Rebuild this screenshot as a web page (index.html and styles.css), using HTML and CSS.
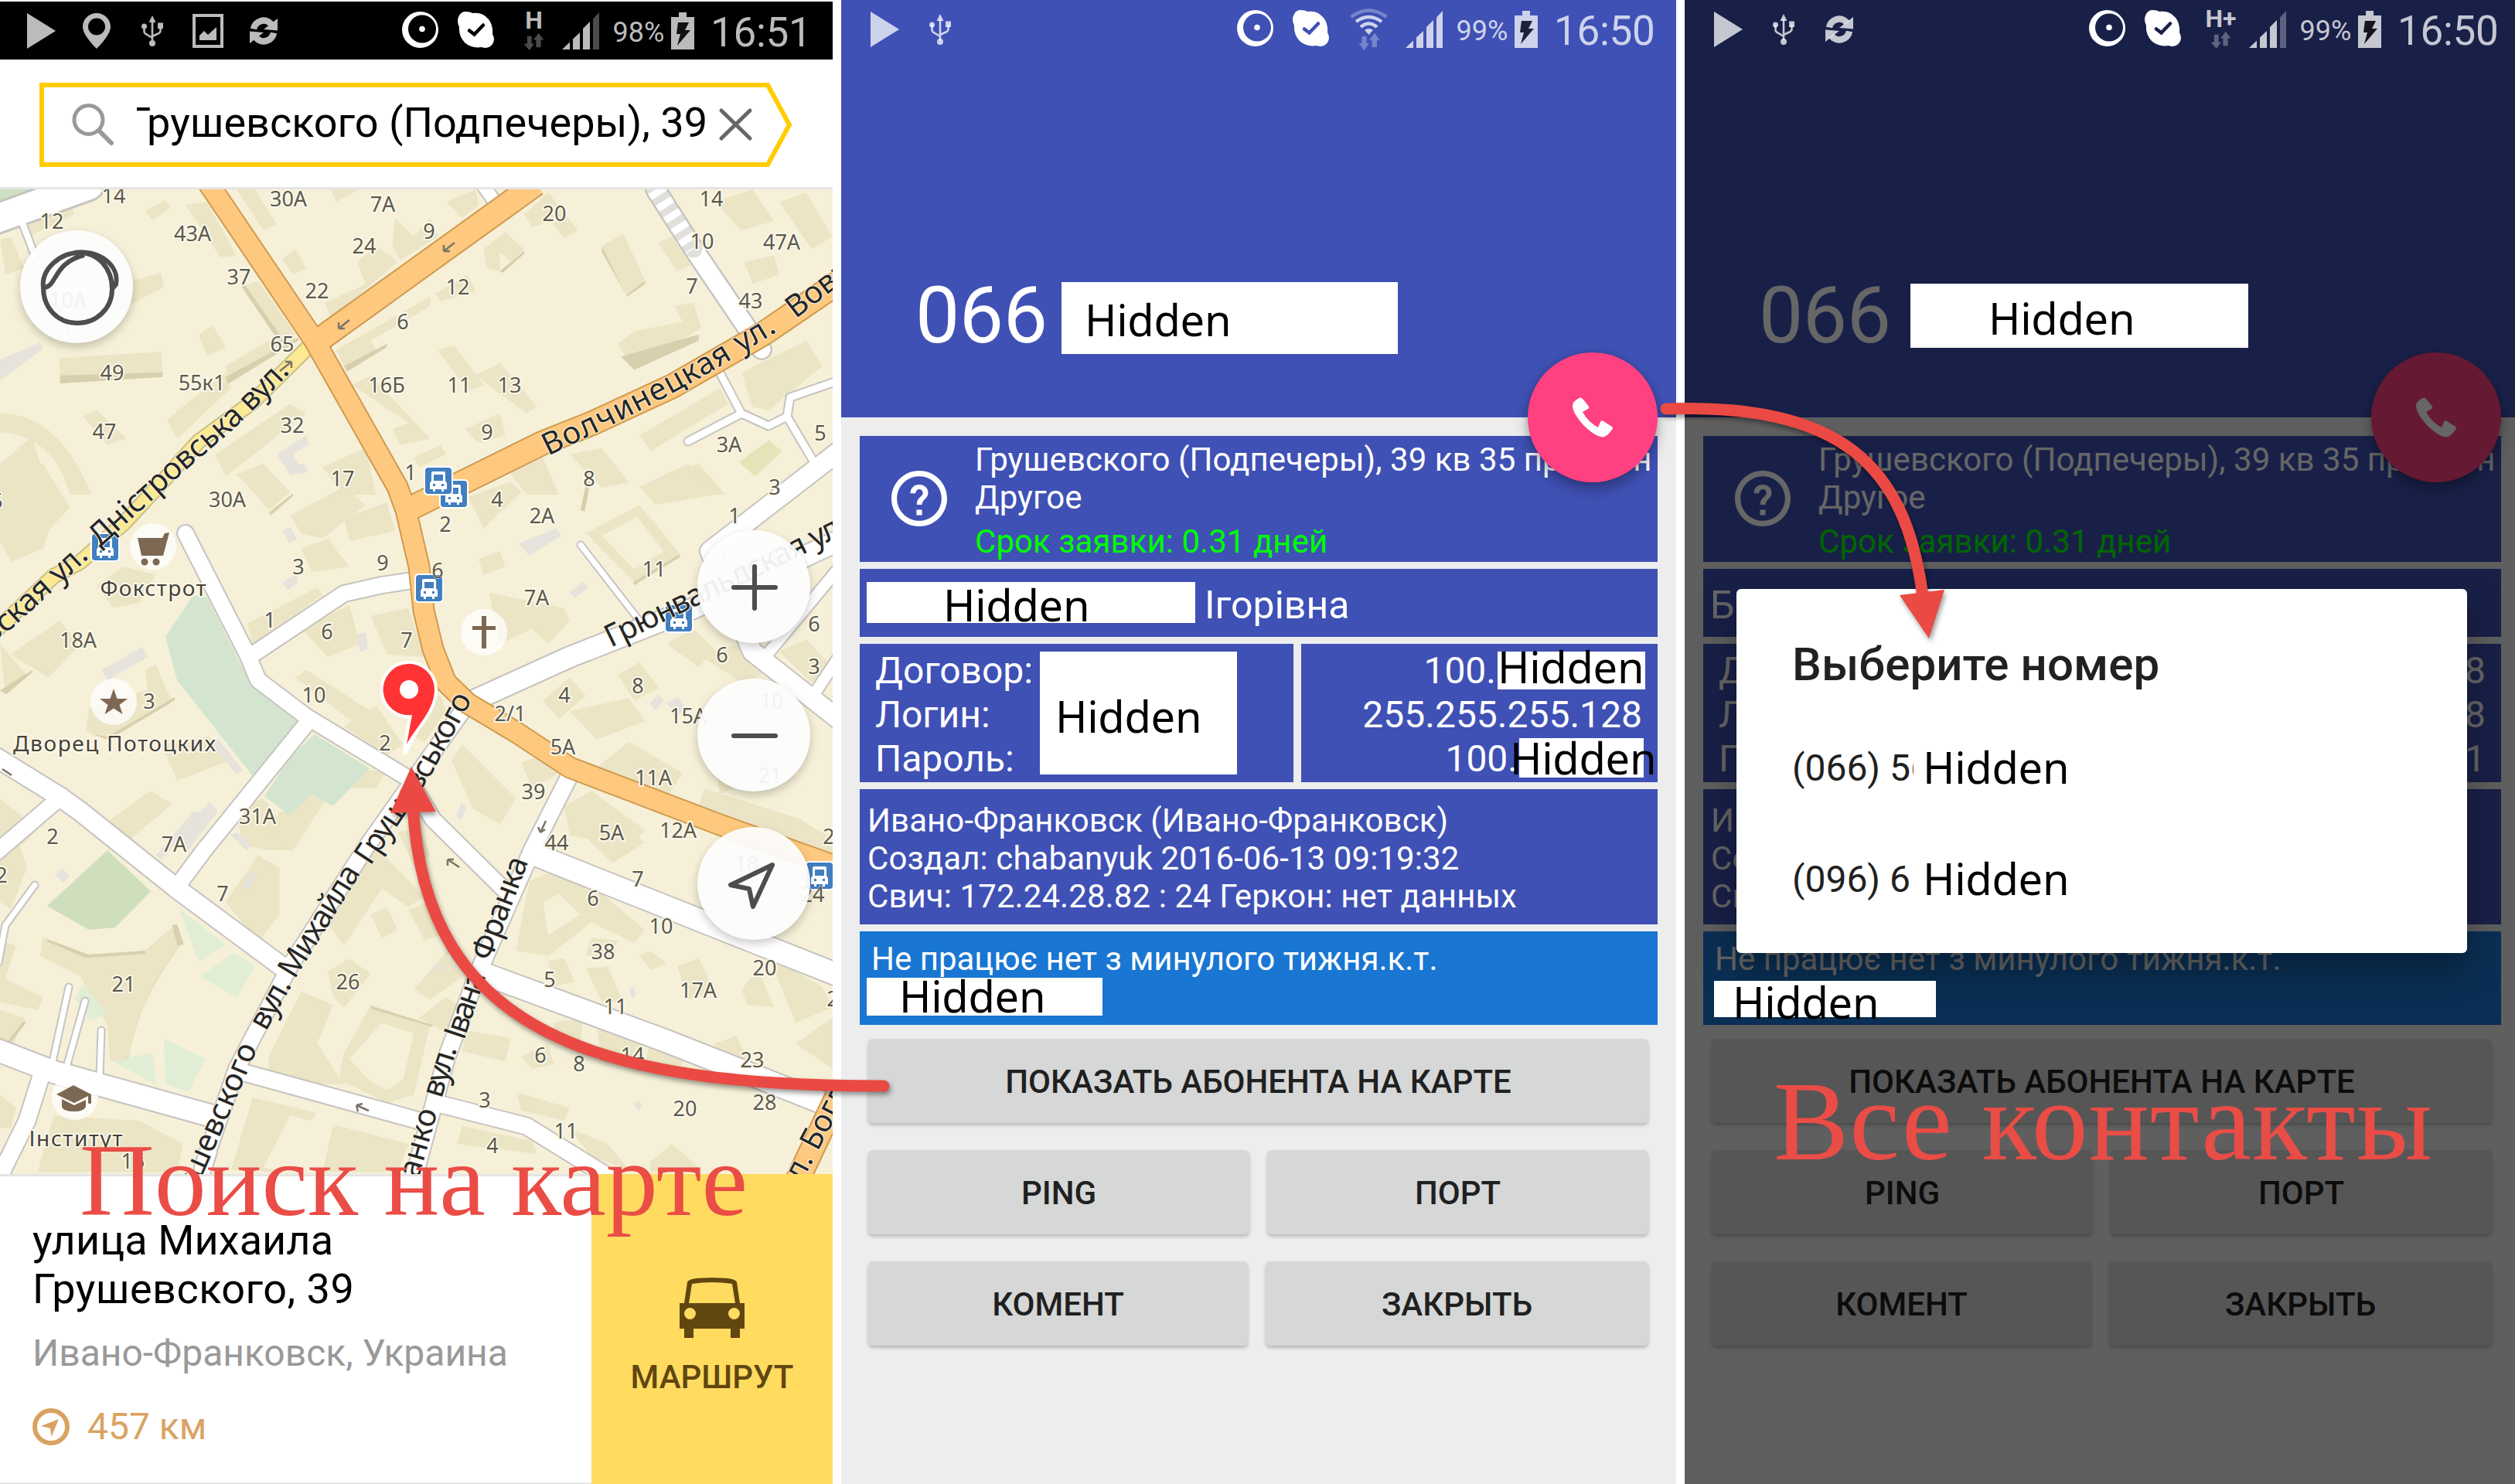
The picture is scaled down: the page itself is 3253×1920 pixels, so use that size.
FILE: index.html
```
<!DOCTYPE html>
<html lang="ru">
<head>
<meta charset="utf-8">
<title>Абонент на карте</title>
<link rel="stylesheet" href="styles.css">
</head>
<body>
<svg class="defs" aria-hidden="true">
  <symbol id="i-play" viewBox="0 0 37 46"><path d="M0 0 37 23 0 46Z"/></symbol>
  <symbol id="i-pin" viewBox="0 0 36 46"><path fill-rule="evenodd" d="M18 0C8 0 0 8 0 17.500C0 29 18 46 18 46S36 29 36 17.500C36 8 28 0 18 0ZM18 6.500A11 11 0 0 1 18 28.500A11 11 0 0 1 18 6.500Z"/></symbol>
  <symbol id="i-usb" viewBox="0 0 28 40"><path d="M14 0 18.500 9H9.500Z"/><g fill="none" stroke="currentColor" stroke-width="2.600"><path d="M14 7V34M3.500 14V21Q3.500 23 5.500 24L14 29M24.500 14V20Q24.500 22 22.500 23L14 27"/></g><circle cx="14" cy="36" r="4"/><circle cx="3.500" cy="14" r="3.500"/><path d="M21 9.500H28V17H21Z"/></symbol>
  <symbol id="i-image" viewBox="0 0 40 44"><path fill-rule="evenodd" d="M0 0H40V44H0ZM4 4V40H36V4Z"/><path d="M9 34V28L15 22 20 27 31 17V34Z"/></symbol>
  <symbol id="i-sync" viewBox="0 0 38 36"><g fill="none" stroke="currentColor" stroke-width="8.500"><path d="M6 15.500A13 13 0 0 1 29 9.500"/><path d="M32 20.500A13 13 0 0 1 9 26.500"/></g><path d="M37 2V17.500L19 16Z"/><path d="M1 34V18.500L19 20Z"/></symbol>
  <symbol id="i-ring" viewBox="0 0 47 47"><path fill-rule="evenodd" d="M23.500 0A23.500 23.500 0 0 1 23.500 47A23.500 23.500 0 0 1 23.500 0ZM26 4.500A18 18 0 0 0 26 40.500A18 18 0 0 0 26 4.500Z"/><circle cx="26" cy="22.500" r="3.800"/></symbol>
  <symbol id="i-skype" viewBox="0 0 47 47"><path d="M10 0Q16 0 19 2Q32 0 40 10Q46 18 45 29Q49 36 45 42Q40 49 31 46Q18 48 9 40Q1 31 2 20Q-2 12 2 5Q5 0 10 0Z"/><path d="M15 24.500 21.500 29.500 33 17.500" class="skype-tick"/></symbol>
  <symbol id="i-traffic" viewBox="0 0 27 23"><path d="M4.500 4H10.500V14H14L7.500 23 0 14H4.500ZM16.500 19V9H13L20 0 27 9H23V19Z"/></symbol>
  <symbol id="i-wifi" viewBox="0 0 49 54"><g fill="none" stroke="currentColor" stroke-width="4.200"><path class="dim" d="M1.500 11Q24.500-6 47.500 11"/><path d="M8 17Q24.500 5 41 17M14 24Q24.500 15 35 24"/></g><path d="M19 28Q24.500 24 30 28L24.500 34Z"/><path class="dim" d="M15.500 36H21.500V45H25L18.500 54 11.500 45H15.500ZM28.500 50V41H25L32 31.500 38.500 41H35V50Z"/></symbol>
  <symbol id="i-signal" viewBox="0 0 48 48"><path d="M0 48 10 38.500V48ZM14 34.500 23 26V48H14ZM27 21 36 12V48H27Z"/><path class="last" d="M40 8.500 48 0V48H40Z"/></symbol>
  <symbol id="i-battery" viewBox="0 0 30 48"><path d="M10 0H20V6H30V48H0V6H10Z"/><path class="bolt" d="M9 13H23L18 23H25L8 43 12 28H7Z"/></symbol>
  <symbol id="i-call" viewBox="0 0 52 52"><path d="M11 .500Q13 1 21 12Q22 13 20 15L13 19Q20 32 33 39L36.500 31Q38 29.500 40 31L51 38Q52.500 40 51 42Q44 52 38 51.500Q28 50 14 36Q0 20 0 11Q0 7 4 4Q9 0 11 .500Z"/></symbol>
  <symbol id="i-help" viewBox="2 2 20 20"><path d="M11 18h2v-2h-2v2zm1-16C6.480 2 2 6.480 2 12s4.480 10 10 10 10-4.480 10-10S17.520 2 12 2zm0 18c-4.410 0-8-3.590-8-8s3.590-8 8-8 8 3.590 8 8-3.590 8-8 8zm0-13c-1.900 0-3.200 1.300-3.200 3.100h1.900c0-.8.600-1.400 1.300-1.400s1.300.6 1.300 1.300c0 1.400-2.200 1.500-2.200 4.200h1.900c0-1.900 2.200-2.200 2.200-4.300 0-1.700-1.400-2.900-3.200-2.900z"/></symbol>
  <symbol id="i-bus" viewBox="0 0 40 40"><rect x="1" y="1" width="38" height="38" rx="5" fill="#fff"/><rect x="3" y="3" width="34" height="34" rx="4" fill="#417fc0"/><path fill="#fff" fill-rule="evenodd" d="M13 8H27Q29 8 29 11V20L31 23V31H27V34H24V31H16V34H13V31H9V23L11 20V11Q11 8 13 8ZM14 12V20H26V12ZM13 24V27H16V24ZM24 24V27H27V24Z"/></symbol>
</svg>

<main class="board">
  <!-- Map search -->
  <section class="phone phone-map">
    <div class="status status-map">
      <div class="slots">
        <span><svg width="37" height="46"><use href="#i-play"/></svg></span>
        <span><svg width="36" height="46"><use href="#i-pin"/></svg></span>
        <span><svg width="28" height="40"><use href="#i-usb"/></svg></span>
        <span><svg width="40" height="44"><use href="#i-image"/></svg></span>
        <span><svg width="38" height="36"><use href="#i-sync"/></svg></span>
      </div>
      <div class="slots right">
        <span class="white"><svg width="47" height="47"><use href="#i-ring"/></svg></span>
        <span class="white"><svg width="47" height="47"><use href="#i-skype"/></svg></span>
        <span class="net"><b>H</b><svg width="27" height="22"><use href="#i-traffic"/></svg></span>
        <svg class="signal weak" width="48" height="48"><use href="#i-signal"/></svg>
        <span class="pct">98%</span>
        <svg width="30" height="48"><use href="#i-battery"/></svg>
        <span class="clock">16:51</span>
      </div>
    </div>
    <div class="search">
      <svg class="search-frame" width="976" height="112" viewBox="0 0 976 112"><path d="M3 3H942L970 54.500 942 106H3Z" stroke="#fc0" stroke-width="6"/><g stroke-linecap="round"><circle cx="63.500" cy="48" r="18.500" stroke="#999" stroke-width="5"/><path d="M77 62 93 78" stroke="#999" stroke-width="6"/><path d="M882 36 919 72M919 36 882 72" stroke="#666" stroke-width="5"/></g></svg>
      <div class="query"><span>Грушевского (Подпечеры), 39</span></div>
    </div>
    <svg class="map" viewBox="0 245 1077 1274" width="1077" height="1274">
      <rect y="245" width="1077" height="1274" fill="#f6f0d8"/>
      <g transform="scale(.6952 .4082)" fill="#ebe4c5">
        <path d="M50 700 130 620 138 680 60 745ZM270 670 305 635 318 655 285 700ZM345 650 385 640 440 810 410 815ZM440 600 470 590 515 710 490 730ZM615 600 670 600 625 640ZM735 690 770 750 800 690 815 750 745 825 730 780ZM830 640 885 600 890 650 860 690ZM975 680 1020 610 1075 730 1050 755 1025 700 990 720ZM1120 780 1160 740 1200 890 1165 935ZM1225 770 1250 750 1285 840 1260 860ZM1330 640 1400 600 1440 700 1380 730ZM1450 640 1500 610 1549 750 1510 790ZM1385 830 1440 810 1450 870 1400 900ZM0 760 20 750 45 850 10 870ZM200 910 300 865 305 910 220 985ZM450 910 480 890 550 1060 520 1080ZM525 820 550 790 570 850 545 870ZM665 830 700 780 740 830 615 1010 605 960 680 900ZM900 790 940 735 975 790 950 830 930 800 930 860 905 850ZM810 930 870 870 885 925 820 955ZM625 1110 800 940 800 970 690 1080 700 1110 645 1175ZM370 1060 395 1030 420 1100 385 1130ZM420 1160 540 1040 550 1080 425 1215ZM110 1135 300 1115 303 1190 112 1212ZM1150 1090 1180 1050 1270 1020 1255 970 1290 960 1305 1040 1180 1170ZM815 1110 845 1095 900 1220 870 1240ZM885 1190 930 1150 1000 1290 980 1310ZM655 1220 690 1190 800 1390 745 1410 730 1360 760 1340ZM155 1320 180 1300 235 1390 200 1410ZM310 1330 420 1180 430 1230 330 1390ZM400 1440 540 1280 570 1310 420 1510ZM865 1360 930 1310 940 1380 890 1405ZM1190 1380 1340 1230 1355 1280 1210 1430ZM1380 1180 1500 1080 1530 1160 1430 1300 1400 1290ZM600 1480 680 1420 700 1568 640 1568ZM770 1450 820 1410 830 1440 780 1480ZM950 1500 1010 1450 1040 1568 980 1568ZM1060 1440 1120 1420 1170 1530 1120 1545ZM1240 1500 1300 1470 1350 1568 1270 1568ZM0 1310Q110 1310 170 1568H130Q100 1380 0 1370ZM0 1470 60 1385 80 1500 40 1568H0Z"/>
        <path fill="#d8cfae" d="M1120 780 1165 935 1200 890V900L1167 940 1120 800ZM112 1190 303 1180V1195L112 1215ZM1155 1130 1300 1060V1080L1180 1172ZM420 1195 555 1070V1080L424 1217ZM930 860 975 795V805L935 865ZM640 1160 720 1090V1100L646 1178ZM450 910 455 900 530 1085H520Z"/>
        <path fill="#e6e2dc" d="M0 1140 75 1085 80 1105 0 1205ZM515 1440 570 1380 575 1410 545 1440 565 1500 540 1505Z"/>
        <path fill="#e5e4b8" d="M1375 1465 1430 1395 1455 1430 1405 1510Z"/>
      </g>
      <g transform="translate(0 600) scale(.6952 .3333)" fill="#ebe4c5">
        <path d="M0 0 80 0 130 170 90 260 80 330 20 380 0 300ZM20 740 110 610 150 700 90 830 60 790ZM180 470 230 400 290 430 260 540 210 560ZM440 40 490 0 540 110 500 180 480 130ZM540 200 640 90 680 160 600 290 560 270ZM560 330 610 290 650 400 580 420ZM640 210 720 150 735 260 650 300ZM1090 270 1190 160 1265 350 1180 460ZM870 130 950 70 970 110 900 250ZM1190 90 1280 0 1330 120 1220 160ZM890 370 930 340 940 400 900 430ZM460 620 590 480 600 510 470 700ZM560 640 650 550 670 700 610 750ZM690 590 760 560 790 750 720 740ZM910 500 1050 560 1060 610 1020 700 990 640 930 700ZM960 560 1010 540 1050 640 1020 670ZM1010 920 1060 830 1090 900 1040 990ZM1150 820 1190 770 1225 870 1180 920ZM1240 700 1290 640 1330 720 1300 790ZM1300 740 1400 690 1440 800 1380 850ZM1450 730 1500 680 1549 790 1510 850ZM550 830 570 800 720 1000 690 1060ZM640 1020 700 940 750 1090 720 1130ZM780 900 820 900 830 960 790 1080 760 1050ZM0 700 50 820 10 890ZM165 950 300 860 320 910 200 1060 160 1040ZM270 800 290 780 315 900 280 960ZM300 1090 390 1060 430 1150 330 1230ZM200 1390 280 1270 320 1320 230 1480ZM440 1330 490 1300 545 1450 500 1500 450 1480ZM500 1440 600 1190 720 1190 700 1260 620 1260 545 1500 500 1500ZM840 1150 860 1090 960 1300 930 1400 880 1340ZM970 1160 1010 1130 1040 1200 990 1260ZM1060 960 1170 910 1200 1000 1110 1070ZM1110 1180 1170 1080 1270 1200 1240 1300ZM1310 1260 1490 1380 1540 1450 1500 1500 1300 1330ZM1320 1040 1390 960 1450 1200 1340 1280ZM1050 1330 1100 1270 1200 1420 1170 1500 1060 1440ZM0 1300 70 1420 30 1500 0 1500Z"/>
        <path fill="#f6f0d8" d="M1120 280 1185 205 1235 340 1180 410Z"/>
        <path fill="#e6e2dc" d="M190 800 265 710 275 750 200 840ZM525 460 550 430 555 460 535 490ZM525 260 540 245 552 290 538 310ZM965 310 1035 250 1043 280 985 358ZM1060 500 1085 455 1095 480 1070 520ZM665 660 680 655 685 720 670 730ZM1210 930 1225 895 1235 920 1218 958ZM330 1470 390 1310 405 1350 350 1500ZM390 1080 405 1065 452 1190 440 1205ZM848 1370 858 1315 868 1330 858 1385ZM1240 930 1262 905 1280 960 1262 970ZM530 0H565L575 30 550 40Z"/>
        <path fill="#d8cfae" d="M0 880 60 800V810L12 895ZM1080 180 1095 30H1102L1088 185ZM1178 460 1265 350V362L1180 472ZM1300 1330 1500 1500H1480L1300 1345ZM500 190 545 115V125L504 200ZM165 1045 200 1060 325 905V918L202 1072Z"/>
      </g>
      <g transform="translate(0 1050) scale(.6952 .3333)" fill="#ebe4c5">
        <path d="M0 50 40 150 50 220 20 380 0 350ZM80 490 165 560 270 540 320 450 340 510Q250 760 240 960L205 970 200 830 150 640 75 560ZM0 500 30 520 10 650 80 720 70 770 0 740ZM0 770 45 800 20 930 0 930ZM420 350 480 170 520 220 520 400 480 510ZM520 0 590 0 550 140 500 90ZM590 380 700 140 790 330 760 370 710 300 640 520ZM740 80 780 60 800 170 770 210ZM690 400 720 370 740 460 710 490ZM760 380 800 350 830 470 790 500ZM610 620 650 570 690 630 640 760 620 720ZM560 700 620 750 590 900 640 1060 500 1050 500 950ZM640 940 690 750 800 830 770 1100 720 1130 630 1040ZM850 500 830 560 860 640 800 730 770 690ZM830 720 860 760 850 880 780 800ZM985 270 1030 230 1110 300 1200 460 1180 510 1100 430 1020 560 960 540ZM1190 560 1210 540 1240 590 1210 615ZM1260 600 1300 570 1330 700 1280 730ZM1090 610 1130 600 1160 740 1120 740ZM1020 580 1050 570 1070 660 1030 680ZM1380 690 1410 610 1440 760 1390 750ZM1430 560 1530 680 1549 760 1480 820ZM1480 900 1549 800 1549 1000ZM870 850 950 880 940 970 860 930ZM970 950 1020 900 1030 980 990 1000ZM1030 820 1085 800 1080 900 1040 900ZM1110 840 1200 890 1190 1010 1120 960ZM1210 860 1280 950 1250 1030 1200 1000ZM1330 900 1370 870 1400 1000 1340 1000ZM1150 500 1100 490 1090 560 1140 570ZM470 1110 590 1170 510 1400 430 1390ZM620 1215 760 1290 740 1400 600 1400ZM860 1220 990 1280 1000 1330 850 1290ZM960 1090 1060 1150 1050 1200 970 1160ZM1060 1230 1130 1290 1170 1390 1100 1340ZM1210 1360 1250 1290 1300 1380 1280 1400H1210ZM1090 100 1140 20 1200 120 1140 200ZM0 1100 30 1150 20 1230 0 1230ZM100 1180 260 1200 340 1290 330 1400H70ZM1250 0 1440 0 1549 100 1549 170 1460 130Z"/>
        <path fill="#f6f0d8" d="M690 1050 650 960 710 820 770 860 750 1040 720 1080ZM490 1380 540 1180 580 1200 530 1400ZM1010 350 1040 320 1080 400 1020 480Z"/>
        <path fill="#d8cfae" d="M88 495 165 555 270 540V552L160 568 88 505ZM320 440 330 438 342 515 330 520ZM230 960 240 950Q260 720 330 530 270 700 248 870L238 965ZM0 930 45 810 48 820 5 938ZM690 755 805 828V836L690 765Z"/>
        <path fill="#e6e2dc" d="M290 170 360 0H385L300 185ZM430 90 440 80 468 130 460 155ZM103 245 115 220 130 250 118 278ZM452 295 465 235 477 245 462 305ZM805 600 812 585 820 605 812 620ZM1170 690 1178 680 1184 710 1176 725ZM1180 1140 1188 1120 1196 1140 1188 1162Z"/>
      </g>
      <path fill="#cfe0c2" d="M0 245H76L0 272Z"/>
      <path fill="#d3e5cf" d="M250 770 268 773 323 883 388 936 324 1020 330 1008 229 880 214 824ZM407 950 478 994 431 1043 403 1027 375 1055 342 1030 375 980Z"/>
      <path fill="#cfdfbe" d="M139 1100 195 1153 149 1200 115 1203 61 1172Z"/>
      <path fill="#e2edd5" d="M232 1176 292 1222 257 1245ZM302 1233 330 1250 306 1290 259 1263ZM212 1343 266 1370 243 1413 214 1402ZM198 1362 202 1403 145 1373ZM108 1273 139 1313 115 1320 97 1292Z"/>
      <g class="road-edge">
        <path stroke-width="42" d="M-10 285 115 240"/>
        <path stroke-width="12" d="M28 286 85 436"/>
        <path stroke-width="28" d="M897 322 966 424 985 452M848 245 897 322"/>
        <path stroke-width="20" d="M625 240 650 275"/>
        <path stroke-width="13" d="M931 482 959 535 890 571M959 535 994 551 1018 539 1022 514 1080 494M1018 539 1060 610"/>
        <path stroke-width="28" d="M1090 580 918 713 973 843 1090 935"/>
        <path stroke-width="18" d="M1085 735 987 853M1085 850 1055 895"/>
        <path stroke-width="30" d="M600 912 737 850 897 787 1090 697"/>
        <path stroke-width="24" d="M240 690 320 847 334 880 396 927 528 1007 560 1060 653 1152"/>
        <path stroke-width="24" d="M322 850 445 768 494 757 540 750M396 937 264 1100 229 1147"/>
        <path stroke-width="28" d="M-5 980 76 1030 104 1050 229 1150 368 1253"/>
        <path stroke-width="24" d="M80 1030-5 1103M473 1097 605 910M262 1510 306 1383 375 1250 473 1097M257 1530 270 1490"/>
        <path stroke-width="25" d="M737 1003 688 1100 619 1257 577 1370 535 1525"/>
        <path stroke-width="32" d="M695 1107 1085 1262M626 1260 862 1347 1085 1435M-5 1358 70 1387 271 1443"/>
        <path stroke-width="25" d="M56 1383 35 1450-2 1525M313 1387 542 1450M563 1427 681 1457 799 1530"/>
        <path stroke-width="11" d="M89 1277 66 1383M110 1295 87 1377M131 1333 129 1392M45 1145 7 1197-2 1245M751 705 827 803"/>
      </g>
      <g class="road">
        <path stroke-width="36" d="M-10 285 115 240"/>
        <path stroke-width="8" d="M28 286 85 436"/>
        <path stroke-width="23" d="M897 322 966 424 985 452"/>
        <path stroke-width="23" stroke="#e2e0dc" d="M848 245 897 322"/>
        <path stroke-width="23" stroke-dasharray="9 9" stroke-linecap="butt" d="M848 245 897 322"/>
        <path stroke-width="16" d="M625 240 650 275"/>
        <path stroke-width="9" d="M931 482 959 535 890 571M959 535 994 551 1018 539 1022 514 1080 494M1018 539 1060 610"/>
        <path stroke-width="24" d="M1090 580 918 713 973 843 1090 935"/>
        <path stroke-width="14" d="M1085 735 987 853M1085 850 1055 895"/>
        <path stroke-width="26" d="M600 912 737 850 897 787 1090 697"/>
        <path stroke-width="20" d="M240 690 320 847 334 880 396 927 528 1007 560 1060 653 1152"/>
        <path stroke-width="20" d="M322 850 445 768 494 757 540 750M396 937 264 1100 229 1147"/>
        <path stroke-width="24" d="M-5 980 76 1030 104 1050 229 1150 368 1253"/>
        <path stroke-width="20" d="M80 1030-5 1103M473 1097 605 910M262 1510 306 1383 375 1250 473 1097M257 1530 270 1490"/>
        <path stroke-width="21" d="M737 1003 688 1100 619 1257 577 1370 535 1525"/>
        <path stroke-width="28" d="M695 1107 1085 1262M626 1260 862 1347 1085 1435M-5 1358 70 1387 271 1443"/>
        <path stroke-width="21" d="M56 1383 35 1450-2 1525M313 1387 542 1450M563 1427 681 1457 799 1530"/>
        <path stroke-width="7" d="M89 1277 66 1383M110 1295 87 1377M131 1333 129 1392M45 1145 7 1197-2 1245M751 705 827 803"/>
      </g>
      <g fill="none" stroke-linejoin="round">
        <path stroke="#c9bf85" stroke-width="21" d="M400 448 327 520 257 571 202 632 160 677 104 727 70 745-5 815"/>
        <path stroke="#fbe993" stroke-width="17" d="M400 448 327 520 257 571 202 632 160 677 104 727 70 745-5 815"/>
        <g stroke="#cf9a4e"><path stroke-width="29" d="M268 235 407 441 514 630 525 660 542 733 548 790 560 840 577 883 605 910 667 947 737 993 931 1067 1085 1122"/><path stroke-width="33" d="M693 238 407 444M522 662 702 573 765 548 869 500 987 432 1085 365M1082 1420 1030 1530"/></g>
        <g stroke="#fec97f"><path stroke-width="25" d="M268 235 407 441 514 630 525 660 542 733 548 790 560 840 577 883 605 910 667 947 737 993 931 1067 1085 1122"/><path stroke-width="29" d="M693 238 407 444M522 662 702 573 765 548 869 500 987 432 1085 365M1082 1420 1030 1530"/></g>
      </g>
      <g class="flow">
        <path d="M588 314 574 325M574 325v-8m0 8h8M452 414 438 425M438 425v-8m0 8h8M362 480 377 468M377 468v8m0-8h-8M706 1062 699 1077M699 1077l-3-7m3 7 6-4M594 1122 579 1112M579 1112v8m0-8h8M477 1437 461 1430M461 1430l2 8m-2-8 8-2M15 1003 3 995"/>
      </g>
      <g class="house">
        <text x="147" y="263">14</text><text x="373" y="267">30А</text><text x="495" y="274">7А</text><text x="717" y="286">20</text><text x="920" y="267">14</text><text x="67" y="296">12</text><text x="249" y="312">43А</text><text x="471" y="328">24</text><text x="555" y="309">9</text><text x="908" y="322">10</text><text x="1011" y="323">47А</text><text x="309" y="368">37</text><text x="410" y="386">22</text><text x="592" y="381">12</text><text x="895" y="380">7</text><text x="971" y="399">43</text><text x="88" y="398">10А</text><text x="521" y="426">6</text><text x="365" y="455">65</text><text x="145" y="492">49</text><text x="261" y="505">55к1</text><text x="500" y="508">16Б</text><text x="594" y="508">11</text><text x="659" y="508">13</text><text x="135" y="568">47</text><text x="378" y="560">32</text><text x="630" y="569">9</text><text x="943" y="585">3А</text><text x="1061" y="570">5</text><text x="443" y="629">17</text><text x="531" y="621">1</text><text x="762" y="629">8</text><text x="1002" y="640">3</text>
        <text x="294" y="656">30А</text><text x="643" y="656">4</text><text x="576" y="688">2</text><text x="701" y="677">2А</text><text x="950" y="677">1</text><text x="386" y="743">3</text><text x="495" y="738">9</text><text x="846" y="746">11</text><text x="694" y="783">7А</text><text x="349" y="812">1</text><text x="423" y="827">6</text><text x="526" y="838">7</text><text x="101" y="838">18А</text><text x="1053" y="817">6</text><text x="934" y="857">6</text><text x="1053" y="872">3</text><text x="825" y="897">8</text><text x="406" y="909">10</text><text x="730" y="909">4</text><text x="193" y="917">3</text><text x="998" y="917">10</text><text x="660" y="933">2/1</text><text x="890" y="936">15А</text><text x="498" y="971">2</text><text x="728" y="976">5А</text><text x="996" y="1013">21</text><text x="845" y="1016">11А</text><text x="690" y="1034">39</text><text x="333" y="1066">31А</text><text x="68" y="1092">2</text><text x="225" y="1102">7А</text><text x="791" y="1087">5А</text><text x="877" y="1084">12А</text><text x="720" y="1100">44</text><text x="-4" y="658">5</text><text x="1072" y="1092">2</text>
        <text x="966" y="1127">18</text><text x="288" y="1166">7</text><text x="2" y="1142">2</text><text x="825" y="1147">7</text><text x="767" y="1172">6</text><text x="855" y="1208">10</text><text x="780" y="1241">38</text><text x="989" y="1262">20</text><text x="160" y="1283">21</text><text x="450" y="1280">26</text><text x="711" y="1277">5</text><text x="903" y="1291">17А</text><text x="796" y="1312">11</text><text x="1077" y="1302">2</text><text x="973" y="1381">23</text><text x="699" y="1375">6</text><text x="749" y="1386">8</text><text x="818" y="1375">14</text><text x="627" y="1433">3</text><text x="886" y="1444">20</text><text x="989" y="1436">28</text><text x="732" y="1473">11</text><text x="637" y="1492">4</text><text x="172" y="1512">15</text>
      </g>
      <g>
        <use href="#i-bus" x="567" y="619" width="40" height="40"/><use href="#i-bus" x="547" y="602" width="40" height="40"/><use href="#i-bus" x="535" y="741" width="40" height="40"/><use href="#i-bus" x="858" y="780" width="40" height="40"/><use href="#i-bus" x="116" y="688" width="40" height="40"/><use href="#i-bus" x="1040" y="1113" width="40" height="40"/>
      </g>
      <g class="house plain"><text x="566" y="748">6</text><text x="1051" y="1167">24</text></g>
      <g fill="#fff" fill-opacity=".75"><circle cx="198" cy="707" r="30"/><circle cx="626" cy="818" r="30"/><circle cx="147" cy="908" r="30"/><circle cx="97" cy="1419" r="30"/></g>
      <g fill="#7d6853">
        <path d="M178 696H210L213 690 219 689 211 719H183Z"/><circle cx="187" cy="727" r="4.500"/><circle cx="202" cy="727" r="4.500"/>
        <path d="M623 797H629V810H641V815H629V839H623V815H611V810H623Z"/>
        <path d="M147 891 151.500 904H165L154.500 912 158.500 924 147 916.500 135.500 924 139.500 912 129 904H142.500Z"/>
        <path d="M95 1404 118 1416V1425Q119 1428 116 1428Q113 1428 114 1425V1418L96 1427 73 1416ZM80 1422 96 1430 111 1423V1432Q108 1438 96 1438Q82 1438 80 1432Z"/>
      </g>
      <g class="poi"><text x="198" y="771" textLength="137">Фокстрот</text><text x="148" y="972" textLength="262">Дворец Потоцких</text><text x="98" y="1483" textLength="121">Інститут</text></g>
      <defs>
        <path id="s1" d="M129 709Q232 614 290 566Q325 535 378 479"/><path id="s2" d="M-60 870 18 811 116 721"/>
        <path id="s3" d="M709 590 795 548Q880 505 935 472L1010 426"/><path id="s4" d="M1029 413 1110 350"/>
        <path id="s5" d="M790 838 905 782Q990 742 1120 677"/><path id="s6" d="M226 1600Q290 1460 333 1356"/>
        <path id="s7" d="M344 1335 384 1263 470 1124"/><path id="s8" d="M479 1121 525 1052 557 1004 616 895"/>
        <path id="s9" d="M520 1600 566 1438"/><path id="s10" d="M571 1422 594 1348"/><path id="s11" d="M600 1347 630 1258"/><path id="s12" d="M634 1245 688 1103"/><path id="s13" d="M1037 1530 1110 1390"/>
      </defs>
      <g class="street">
        <text textLength="336"><textPath href="#s1">Дністровська вул.</textPath></text>
        <text text-anchor="end"><textPath href="#s2" startOffset="100%">вская ул.</textPath></text>
        <text textLength="338"><textPath href="#s3">Волчинецкая ул.</textPath></text>
        <text><textPath href="#s4">Вовч</textPath></text>
        <text textLength="334"><textPath href="#s5">Грюнвальдская ул</textPath></text>
        <text text-anchor="end"><textPath href="#s6" startOffset="100%">Грушевского</textPath></text>
        <text textLength="240"><textPath href="#s7">вул. Михайла</textPath></text>
        <text textLength="254"><textPath href="#s8">Грушевського</textPath></text>
        <text text-anchor="end"><textPath href="#s9" startOffset="100%">Франко</textPath></text>
        <text textLength="68"><textPath href="#s10">вул.</textPath></text>
        <text textLength="90"><textPath href="#s11">Івана</textPath></text>
        <text textLength="140"><textPath href="#s12">Франка</textPath></text>
        <text><textPath href="#s13">л. Богда</textPath></text>
      </g>
      <path d="M533 925A33.200 33.200 0 1 1 562 892C562 920 538 940 526 963Z" fill="#fff" stroke="#fff" stroke-width="8" stroke-linejoin="round"/>
      <path d="M528 930 521 973Q522 979 527 974L542 945Z" fill="#fff"/>
      <path d="M533 925A33.200 33.200 0 1 1 562 892C562 920 538 940 526 963Z" fill="#f33"/>
      <circle cx="529" cy="892" r="12" fill="#fff"/>
      <g class="controls"><circle cx="99" cy="371" r="73"/><circle cx="975" cy="759" r="73"/><circle cx="975" cy="951" r="73"/><circle cx="975" cy="1143" r="73"/></g>
      <g fill="none" stroke="#4d4d4d" stroke-width="6">
        <path d="M56 372C53 348 78 327 102 327C128 327 145 348 145 374C145 400 124 418 100 418C74 418 56 398 56 372C74 372 68 340 109 330M96 327C126 322 155 342 150 368L145 374"/>
        <path stroke-linecap="round" d="M976 733V787M949 760H1003M949 952H1003"/><path stroke-linejoin="round" d="M999 1119 945 1145 969 1150 974 1173Z"/>
      </g>
    </svg>
    <div class="place">
      <div class="place-info">
        <h2>улица Михаила<br><span>Грушевского, 39</span></h2>
        <p class="city">Ивано-Франковск, Украина</p>
        <p class="distance"><svg width="48" height="48" viewBox="0 0 48 48"><circle cx="24" cy="24" r="21" fill="none" stroke="#d9a362" stroke-width="6"/><path fill="#d9a362" d="M34 14 24.500 37 23 26 11 23Z"/></svg><span>457 км</span></p>
      </div>
      <div class="route">
        <svg width="84" height="78" viewBox="0 0 84 78"><path fill="#614610" fill-rule="evenodd" d="M6 33 10 6Q11 0 42 0Q73 0 74 6L78 33H84V66H78V78H66V66H18V78H6V66H0V33ZM12 33H72L68 8Q42 4 16 8ZM13.500 39A7.500 7.500 0 0 0 13.500 54A7.500 7.500 0 0 0 13.500 39ZM70.500 39A7.500 7.500 0 0 0 70.500 54A7.500 7.500 0 0 0 70.500 39Z"/></svg>
        <span>МАРШРУТ</span>
      </div>
    </div>
  </section>

  <!-- Request details -->
  <section class="phone">
    <header class="hero">
      <div class="status">
        <div class="slots">
          <span><svg width="37" height="46"><use href="#i-play"/></svg></span>
          <span><svg width="28" height="40"><use href="#i-usb"/></svg></span>
        </div>
        <div class="slots right">
          <span class="white"><svg width="47" height="47"><use href="#i-ring"/></svg></span>
          <span class="white"><svg width="47" height="47"><use href="#i-skype"/></svg></span>
          <span class="net wifi"><svg width="49" height="54"><use href="#i-wifi"/></svg></span>
          <svg class="signal" width="48" height="48"><use href="#i-signal"/></svg>
          <span class="pct">99%</span>
          <svg width="30" height="48"><use href="#i-battery"/></svg>
          <span class="clock">16:50</span>
        </div>
      </div>
      <h1>066</h1>
    </header>
    <div class="cards">
      <div class="card address"><svg width="72" height="72"><use href="#i-help"/></svg><div><p>Грушевского (Подпечеры), 39 кв 35 прозвон</p><p>Другое</p><p class="due">Срок заявки: 0.31 дней</p></div></div>
      <div class="card name after-mask">Ігорівна</div>
      <div class="pair">
        <div class="card login"><p>Договор:</p><p>Логин:</p><p>Пароль:</p></div>
        <div class="card net-info"><p class="ip-a">100.</p><p>255.255.255.128</p><p class="ip-b">100.</p></div>
      </div>
      <div class="card details"><p>Ивано-Франковск (Ивано-Франковск)</p><p>Создал: chabanyuk 2016-06-13 09:19:32</p><p>Свич: 172.24.28.82 : 24 Геркон: нет данных</p></div>
      <div class="card note">Не працює нет з минулого тижня.к.т.</div>
    </div>
    <div class="actions">
      <div><button>ПОКАЗАТЬ АБОНЕНТА НА КАРТЕ</button></div>
      <div><button>PING</button><button>ПОРТ</button></div>
      <div><button class="narrow">КОМЕНТ</button><button>ЗАКРЫТЬ</button></div>
    </div>
    <div class="fab"><svg width="52" height="52"><use href="#i-call"/></svg></div>
    <span class="mask m-phone">Hidden</span><span class="mask m-name">Hidden</span><span class="mask m-login">Hidden</span><span class="mask m-ip1">Hidden</span><span class="mask m-ip2">Hidden</span><span class="mask m-note">Hidden</span>
  </section>

  <!-- Contact picker -->
  <section class="phone">
    <header class="hero">
      <div class="status on-top">
        <div class="slots">
          <span><svg width="37" height="46"><use href="#i-play"/></svg></span>
          <span><svg width="28" height="40"><use href="#i-usb"/></svg></span>
          <span><svg width="38" height="36"><use href="#i-sync"/></svg></span>
        </div>
        <div class="slots right">
          <span class="white"><svg width="47" height="47"><use href="#i-ring"/></svg></span>
          <span class="white"><svg width="47" height="47"><use href="#i-skype"/></svg></span>
          <span class="net"><b>H+</b><svg width="27" height="22"><use href="#i-traffic"/></svg></span>
          <svg class="signal weak" width="48" height="48"><use href="#i-signal"/></svg>
          <span class="pct">99%</span>
          <svg width="30" height="48"><use href="#i-battery"/></svg>
          <span class="clock">16:50</span>
        </div>
      </div>
      <h1>066</h1>
    </header>
    <div class="cards">
      <div class="card address"><svg width="72" height="72"><use href="#i-help"/></svg><div><p>Грушевского (Подпечеры), 39 кв 35 прозвон</p><p>Другое</p><p class="due">Срок заявки: 0.31 дней</p></div></div>
      <div class="card name">Б</div>
      <div class="pair">
        <div class="card login"><p>Договор:</p><p>Логин:</p><p>Пароль:</p></div>
        <div class="card net-info"><p>8</p><p>255.255.255.128</p><p>1</p></div>
      </div>
      <div class="card details"><p>Ивано-Франковск (Ивано-Франковск)</p><p>Создал: chabanyuk 2016-06-13 09:19:32</p><p>Свич: 172.24.28.82 : 24 Геркон: нет данных</p></div>
      <div class="card note">Не працює нет з минулого тижня.к.т.</div>
    </div>
    <div class="actions">
      <div><button>ПОКАЗАТЬ АБОНЕНТА НА КАРТЕ</button></div>
      <div><button>PING</button><button>ПОРТ</button></div>
      <div><button class="narrow">КОМЕНТ</button><button>ЗАКРЫТЬ</button></div>
    </div>
    <div class="fab"><svg width="52" height="52"><use href="#i-call"/></svg></div>
    <div class="scrim"></div>
    <div class="dialog">
      <h3>Выберите номер</h3>
      <p><span class="num">(066) 56</span><span class="secret">Hidden</span></p>
      <p><span class="num">(096) 6</span><span class="secret">Hidden</span></p>
    </div>
    <span class="mask n-phone">Hidden</span><span class="mask n-note">Hidden</span>
  </section>

  <svg class="notes" width="3253" height="1920" viewBox="0 0 3253 1920">
    <g class="arrows">
      <path d="M1143 1405C780 1405 548 1340 534 1040"/><path class="head" d="M532 992 505 1052 564 1050Z"/>
      <path d="M2155 529C2380 522 2465 600 2487 772"/><path class="head" d="M2457 770 2515 763 2495 826Z"/>
    </g>
    <text x="103" y="1572" font-size="134" textLength="864">Поиск на карте</text>
    <text x="2294" y="1500" font-size="146" textLength="852">Все контакты</text>
  </svg>
</main>
</body>
</html>
```
FILE: styles.css
```
* { box-sizing: border-box; margin: 0; padding: 0; }
body { width: 3253px; height: 1920px; overflow: hidden; background: #fff; font-family: Roboto, "Noto Sans", sans-serif; }
.defs { position: absolute; width: 0; height: 0; }
svg { display: block; flex: none; fill: currentColor; }

.board { position: relative; display: flex; gap: 11px; width: 3253px; height: 1920px; overflow: hidden; }
.phone { position: relative; flex: none; display: flex; flex-direction: column; width: 1080px; height: 1920px; overflow: hidden; background: #ededed; }
.phone-map { width: 1077px; background: #fff; padding-top: 2px; }

/* Status bar */
.status { display: flex; height: 75px; color: rgba(255, 255, 255, .75); --bolt: #1c2238; --tick: #3f51b5; }
.status-map { width: 1080px; margin-left: -3px; background: #000; color: #bbb; --bolt: #111; --tick: #000; }
.on-top { position: relative; z-index: 2; --bolt: #151520; --tick: #192048; }
.slots { display: flex; align-items: center; padding-left: 20px; }
.slots > span { display: flex; align-items: center; justify-content: center; width: 72px; }
.slots.right { margin-left: auto; padding: 0; }
.slots .white { color: #fff; padding-bottom: 3px; }
.skype-tick { fill: none; stroke: var(--tick); stroke-width: 4.500; stroke-linecap: round; }
.bolt { fill: var(--bolt); }
.dim { opacity: .4; }
.slots > .net { flex-direction: column; width: 79px; margin-right: -3px; gap: 5px; }
.net b { font-size: 32px; line-height: 24px; font-weight: 700; }
.net svg { opacity: .4; }
.slots > .wifi { width: 78px; margin-right: 9px; }
.wifi svg { opacity: 1; }
.weak { --last: .4; }
.last { opacity: var(--last, 1); }
.slots > .pct { width: 84px; margin-left: 9px; font-size: 36px; padding-top: 5px; }
.slots > .clock { width: 179px; padding-left: 21px; justify-content: flex-start; font-size: 53px; letter-spacing: -.3px; padding-top: 4px; }

/* Search */
.search { position: relative; height: 168px; border-bottom: 3px solid #e5e5e5; padding: 30px 0 0 51px; }
.query { position: absolute; left: 177px; top: 49px; width: 738px; height: 66px; overflow: hidden; display: flex; justify-content: flex-end; font-size: 54px; line-height: 66px; white-space: nowrap; color: #000; }
.search-frame { overflow: visible; fill: none; }

/* Map */
.map { overflow: hidden; }
.road-edge { fill: none; stroke: #c6c3c0; stroke-linejoin: round; stroke-linecap: round; }
.road { fill: none; stroke: #fff; stroke-linejoin: round; stroke-linecap: round; }
.flow { fill: none; stroke: #7a7468; stroke-width: 2.500; }
.house text, .poi text, .street text { font-family: "Noto Sans", sans-serif; paint-order: stroke; stroke: #fbf8ea; stroke-width: 4px; stroke-linejoin: round; }
.house text { font-size: 27px; fill: #5d5a4d; text-anchor: middle; }
.plain text { stroke-width: 1px; }
.poi text { font-size: 28px; fill: #45423a; text-anchor: middle; }
.street text { font-size: 40px; fill: #262626; stroke-width: 2px; }
.controls circle { fill: #fff; fill-opacity: .93; filter: drop-shadow(0 5px 6px rgba(0, 0, 0, .22)); }

/* Place card */
.place { display: flex; height: 401px; }
.place-info { width: 765px; padding: 51px 0 0 42px; border-top: 3px solid #e5e5e5; border-bottom: 2px solid #e5e5e5; }
.place h2 { font-weight: 400; font-size: 54px; line-height: 63px; color: #000; letter-spacing: .1px; }
.place h2 span { letter-spacing: .5px; }
.city { margin-top: 24px; font-size: 48px; line-height: 56px; color: #999; }
.distance { display: flex; align-items: center; gap: 23px; margin-top: 39px; font-size: 48px; line-height: 56px; color: #d9a362; }
.route { flex: 1; display: flex; flex-direction: column; align-items: center; padding-top: 134px; background: #ffdb60; color: #614610; font-size: 42px; font-weight: 500; line-height: 50px; gap: 26px; }

/* Details screen */
.hero { height: 540px; background: #3f51b5; color: #fff; }
.hero h1 { margin-top: 273px; padding-left: 96px; font-weight: 400; font-size: 102px; line-height: 120px; letter-spacing: -.5px; }
.cards { display: flex; flex-direction: column; gap: 9px; padding: 24px 24px 0; color: #fff; font-size: 42px; line-height: 49px; white-space: nowrap; }
.card { background: #3f51b5; }
.address { display: flex; height: 163px; padding: 6px 0 0 41px; gap: 36px; overflow: hidden; letter-spacing: .05px; }
.address > svg { margin-top: 39px; }
.due { margin-top: 8px; color: #0f0; }
.name { height: 88px; padding: 19px 0 0 9px; font-size: 50px; line-height: 56px; }
.after-mask { padding-left: 446px; }
.pair { display: flex; gap: 10px; height: 179px; font-size: 48px; line-height: 57px; }
.login { width: 561px; padding: 6px 0 0 20px; }
.net-info { flex: 1; padding: 6px 20px 0 0; text-align: right; }
.ip-a { padding-right: 189px; }
.ip-b { padding-right: 161px; }
.details { height: 175px; padding: 16px 0 0 10px; letter-spacing: .08px; }
.note { height: 121px; padding: 11px 0 0 15px; background: #1976d2; }

.actions { display: flex; flex-direction: column; gap: 35px; padding: 18px 36px 0 35px; }
.actions div { display: flex; gap: 23px; }
.actions button { flex: 1 1 0; height: 109px; padding-top: 1px; border: 0; border-radius: 6px; background: #d6d7d7; color: #1f2020; font: 500 42px Roboto, sans-serif; box-shadow: 0 3px 4px rgba(0, 0, 0, .22); }
.actions .narrow { flex: 0 0 491px; }

.fab { position: absolute; left: 888px; top: 456px; width: 168px; height: 168px; border-radius: 50%; background: #ff4081; color: #fff; display: grid; place-items: center; box-shadow: 0 10px 18px rgba(0, 0, 0, .28), 0 0 8px rgba(0, 0, 0, .15); }

/* Masked personal data */
.mask { position: absolute; z-index: 2; background: #fff; color: #000; font: 56px/60px "Noto Sans", sans-serif; letter-spacing: -.3px; white-space: nowrap; }
.m-phone { left: 285px; top: 365px; width: 435px; height: 93px; padding: 18px 0 0 30px; }
.m-name { left: 33px; top: 753px; width: 425px; height: 53px; padding-left: 99px; line-height: 58px; }
.m-login { left: 257px; top: 843px; width: 255px; height: 159px; padding: 53px 0 0 20px; }
.m-ip1 { left: 849px; top: 843px; width: 191px; height: 49px; line-height: 38px; }
.m-ip2 { left: 877px; top: 955px; width: 161px; height: 51px; line-height: 50px; text-indent: -12px; }
.m-note { left: 33px; top: 1265px; width: 305px; height: 49px; padding-left: 42px; line-height: 46px; }
.n-phone { left: 292px; top: 367px; width: 437px; height: 83px; padding: 14px 0 0 101px; }
.n-note { left: 38px; top: 1269px; width: 287px; height: 47px; padding-left: 24px; line-height: 54px; }

/* Number picker */
.scrim { position: absolute; inset: 0; background: rgba(0, 0, 0, .6); }
.dialog { position: absolute; left: 67px; top: 762px; width: 945px; height: 471px; padding: 63px 72px 0; border-radius: 6px; background: #fff; color: #212121; box-shadow: 0 20px 50px rgba(0, 0, 0, .35); }
.dialog h3 { font-size: 60px; font-weight: 500; line-height: 70px; letter-spacing: .1px; }
.dialog p { display: flex; align-items: center; height: 144px; font-size: 48px; }
.dialog h3 + p { margin-top: 26px; }
.num { width: 157px; overflow: hidden; white-space: nowrap; }
.secret { margin: -2px 0 0 12px; color: #000; font: 56px/60px "Noto Sans", sans-serif; letter-spacing: -.3px; }

/* Annotations over the screens */
.notes { position: absolute; left: 0; top: 0; z-index: 5; }
.notes text { font-family: "Liberation Serif", serif; fill: #ea4c46; }
.arrows { fill: none; stroke: #ea4a43; stroke-width: 15; stroke-linecap: round; filter: drop-shadow(2px 4px 3px rgba(0, 0, 0, .4)); }
.arrows .head { fill: #ea4a43; stroke: none; }
```
